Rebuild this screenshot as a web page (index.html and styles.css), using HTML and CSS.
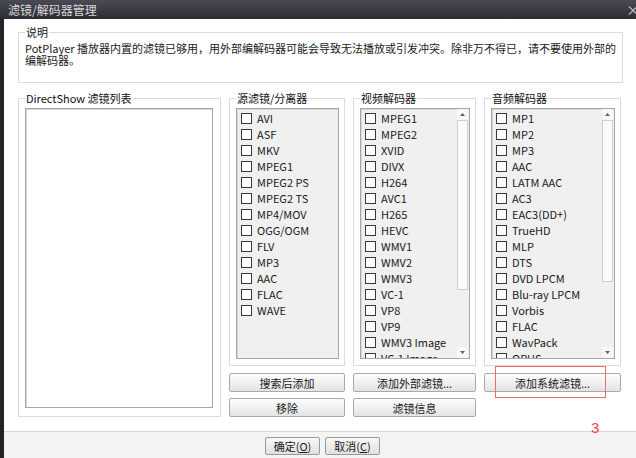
FILE: index.html
```html
<!DOCTYPE html>
<html lang="zh-CN">
<head>
<meta charset="utf-8">
<title>滤镜/解码器管理</title>
<link rel="stylesheet" href="styles.css">
</head>
<body>
<div class="titlebar"><span class="title">滤镜/解码器管理</span><span class="close">×</span></div>
<div class="frame">
  <div class="edge"></div>
  <div class="dialog">
    <div class="content">
      <fieldset class="group desc">
        <legend>说明</legend>
        <p>PotPlayer 播放器内置的滤镜已够用，用外部编解码器可能会导致无法播放或引发冲突。除非万不得已，请不要使用外部的<br>编解码器。</p>
      </fieldset>
      <div class="grid">
        <fieldset class="group ds">
          <legend>DirectShow 滤镜列表</legend>
          <div class="list white"></div>
        </fieldset>
        <fieldset class="group">
          <legend>源滤镜/分离器</legend>
          <div class="list">
            <ul class="items">
              <li><span class="cb"></span>AVI</li>
              <li><span class="cb"></span>ASF</li>
              <li><span class="cb"></span>MKV</li>
              <li><span class="cb"></span>MPEG1</li>
              <li><span class="cb"></span>MPEG2 PS</li>
              <li><span class="cb"></span>MPEG2 TS</li>
              <li><span class="cb"></span>MP4/MOV</li>
              <li><span class="cb"></span>OGG/OGM</li>
              <li><span class="cb"></span>FLV</li>
              <li><span class="cb"></span>MP3</li>
              <li><span class="cb"></span>AAC</li>
              <li><span class="cb"></span>FLAC</li>
              <li><span class="cb"></span>WAVE</li>
            </ul>
          </div>
        </fieldset>
        <fieldset class="group">
          <legend>视频解码器</legend>
          <div class="list">
            <ul class="items">
              <li><span class="cb"></span>MPEG1</li>
              <li><span class="cb"></span>MPEG2</li>
              <li><span class="cb"></span>XVID</li>
              <li><span class="cb"></span>DIVX</li>
              <li><span class="cb"></span>H264</li>
              <li><span class="cb"></span>AVC1</li>
              <li><span class="cb"></span>H265</li>
              <li><span class="cb"></span>HEVC</li>
              <li><span class="cb"></span>WMV1</li>
              <li><span class="cb"></span>WMV2</li>
              <li><span class="cb"></span>WMV3</li>
              <li><span class="cb"></span>VC-1</li>
              <li><span class="cb"></span>VP8</li>
              <li><span class="cb"></span>VP9</li>
              <li><span class="cb"></span>WMV3 Image</li>
              <li><span class="cb"></span>VC-1 Image</li>
            </ul>
            <div class="sb">
              <div class="arrow"><svg width="5" height="3" viewBox="0 0 5 3"><polygon points="0,3 2.5,0 5,3" fill="#606060"/></svg></div>
              <div class="thumb video-thumb"></div>
              <div class="track"></div>
              <div class="arrow"><svg width="5" height="3" viewBox="0 0 5 3"><polygon points="0,0 5,0 2.5,3" fill="#606060"/></svg></div>
            </div>
          </div>
        </fieldset>
        <fieldset class="group">
          <legend>音频解码器</legend>
          <div class="list">
            <ul class="items">
              <li><span class="cb"></span>MP1</li>
              <li><span class="cb"></span>MP2</li>
              <li><span class="cb"></span>MP3</li>
              <li><span class="cb"></span>AAC</li>
              <li><span class="cb"></span>LATM AAC</li>
              <li><span class="cb"></span>AC3</li>
              <li><span class="cb"></span>EAC3(DD+)</li>
              <li><span class="cb"></span>TrueHD</li>
              <li><span class="cb"></span>MLP</li>
              <li><span class="cb"></span>DTS</li>
              <li><span class="cb"></span>DVD LPCM</li>
              <li><span class="cb"></span>Blu-ray LPCM</li>
              <li><span class="cb"></span>Vorbis</li>
              <li><span class="cb"></span>FLAC</li>
              <li><span class="cb"></span>WavPack</li>
              <li><span class="cb"></span>OPUS</li>
            </ul>
            <div class="sb">
              <div class="arrow"><svg width="5" height="3" viewBox="0 0 5 3"><polygon points="0,3 2.5,0 5,3" fill="#606060"/></svg></div>
              <div class="thumb audio-thumb"></div>
              <div class="track"></div>
              <div class="arrow"><svg width="5" height="3" viewBox="0 0 5 3"><polygon points="0,0 5,0 2.5,3" fill="#606060"/></svg></div>
            </div>
          </div>
        </fieldset>
        <button class="btn r2 c2">搜索后添加</button>
        <button class="btn r2 c3">添加外部滤镜...</button>
        <button class="btn r2 c4">添加系统滤镜...</button>
        <button class="btn r3 c2">移除</button>
        <button class="btn r3 c3">滤镜信息</button>
      </div>
    </div>
    <div class="footer">
      <button class="fbtn">确定(<u>O</u>)</button>
      <button class="fbtn">取消(<u>C</u>)</button>
    </div>
  </div>
</div>
<div class="mark-box"></div>
<div class="mark-num">3</div>
</body>
</html>
```

FILE: styles.css
```css
* { box-sizing: border-box; margin: 0; padding: 0; }
html, body { width: 636px; height: 458px; overflow: hidden; }
body {
  position: relative;
  font-family: "Noto Sans CJK SC", "Noto Sans", sans-serif;
  font-size: 11px;
  color: #1a1a1a;
  background: #fff;
}
.titlebar {
  height: 19px;
  background: linear-gradient(#4a4a55, #2c2c34);
  display: flex;
  align-items: center;
  justify-content: space-between;
  padding-left: 8px;
  color: #d8d8d8;
  font-size: 12px;
  line-height: 19px;
  overflow: hidden;
}
.close { margin-right: -4px; font-size: 14px; color: #c8c8c8; }
.frame { display: flex; height: 439px; }
.edge { width: 4px; background: #222227; flex: none; }
.dialog { flex: 1; display: flex; flex-direction: column; background: #fff; }
.content { flex: 1; padding: 6px 15px 0 14px; }

fieldset.group {
  border: 1px solid #dcdcdc;
  min-width: 0;
  padding: 3px 5px 6px 6px;
  display: flex;
  flex-direction: column;
}
fieldset.group legend {
  padding: 0 1px;
  line-height: 14px;
  color: #111;
}
fieldset.desc { padding: 3px 6px 16px 6px; }
.desc p { line-height: 12px; white-space: nowrap; color: #1a1a1a; }

.grid {
  margin-top: 8px;
  display: grid;
  grid-template-columns: 203px 116px 123px 137px;
  grid-template-rows: 275px 26px 25px;
  column-gap: 8px;
}
fieldset.ds { grid-row: 1 / span 3; grid-column: 1; padding: 3px 7px 8px 6px; }

.list {
  flex: 1;
  min-height: 0;
  border: 1px solid #a7a7a7;
  box-shadow: inset 1px 1px 0 #d6d6d6;
  background: #f0f0f0;
  display: flex;
  overflow: hidden;
}
.list.white { background: #fff; }
.items {
  flex: 1;
  list-style: none;
  padding: 1px 0 0 4px;
  overflow: hidden;
  min-width: 0;
}
.items li {
  height: 16px;
  display: flex;
  align-items: center;
  white-space: nowrap;
  color: #1a1a1a;
}
.cb {
  width: 11px;
  height: 11px;
  border: 1px solid #3a3a3a;
  background: #fff;
  margin-right: 5px;
  flex: none;
}
.sb {
  width: 11px;
  margin-right: 1px;
  flex: none;
  display: flex;
  flex-direction: column;
  background: #f0f0f0;
}
.arrow {
  height: 11px;
  flex: none;
  display: flex;
  align-items: center;
  justify-content: center;
  background: #f7f7f7;
}
.thumb {
  flex: none;
  background: #fbfbfb;
  border: 1px solid #cfcfcf;
}
.video-thumb { height: 170px; }
.audio-thumb { height: 162px; }
.track { flex: 1; }

.btn {
  font: inherit;
  height: 19px;
  align-self: end;
  border: 1px solid #a9a9a9;
  border-radius: 2px;
  background: linear-gradient(#fdfdfd, #e4e4e4);
  color: #1a1a1a;
}
.r2 { grid-row: 2; }
.r3 { grid-row: 3; }
.c2 { grid-column: 2; }
.c3 { grid-column: 3; }
.c4 { grid-column: 4; }

.footer {
  height: 27px;
  flex: none;
  border-top: 1px solid #d5d5d5;
  background: #f4f4f4;
  display: flex;
  gap: 5px;
  padding: 5px 0 0 261px;
}
.fbtn {
  font: inherit;
  width: 55px;
  height: 18px;
  border: 1px solid #9a9a9a;
  border-radius: 2px;
  background: linear-gradient(#f8f8f8, #e1e1e1);
  color: #1a1a1a;
}
.fbtn u { text-decoration: underline; }

.mark-box {
  position: absolute;
  left: 495px;
  top: 366px;
  width: 111px;
  height: 32px;
  border: 1px solid #f06a6a;
}
.mark-num {
  position: absolute;
  left: 591px;
  top: 420px;
  font-family: "Liberation Sans", sans-serif;
  font-size: 15px;
  line-height: 15px;
  color: #f04545;
}
```
